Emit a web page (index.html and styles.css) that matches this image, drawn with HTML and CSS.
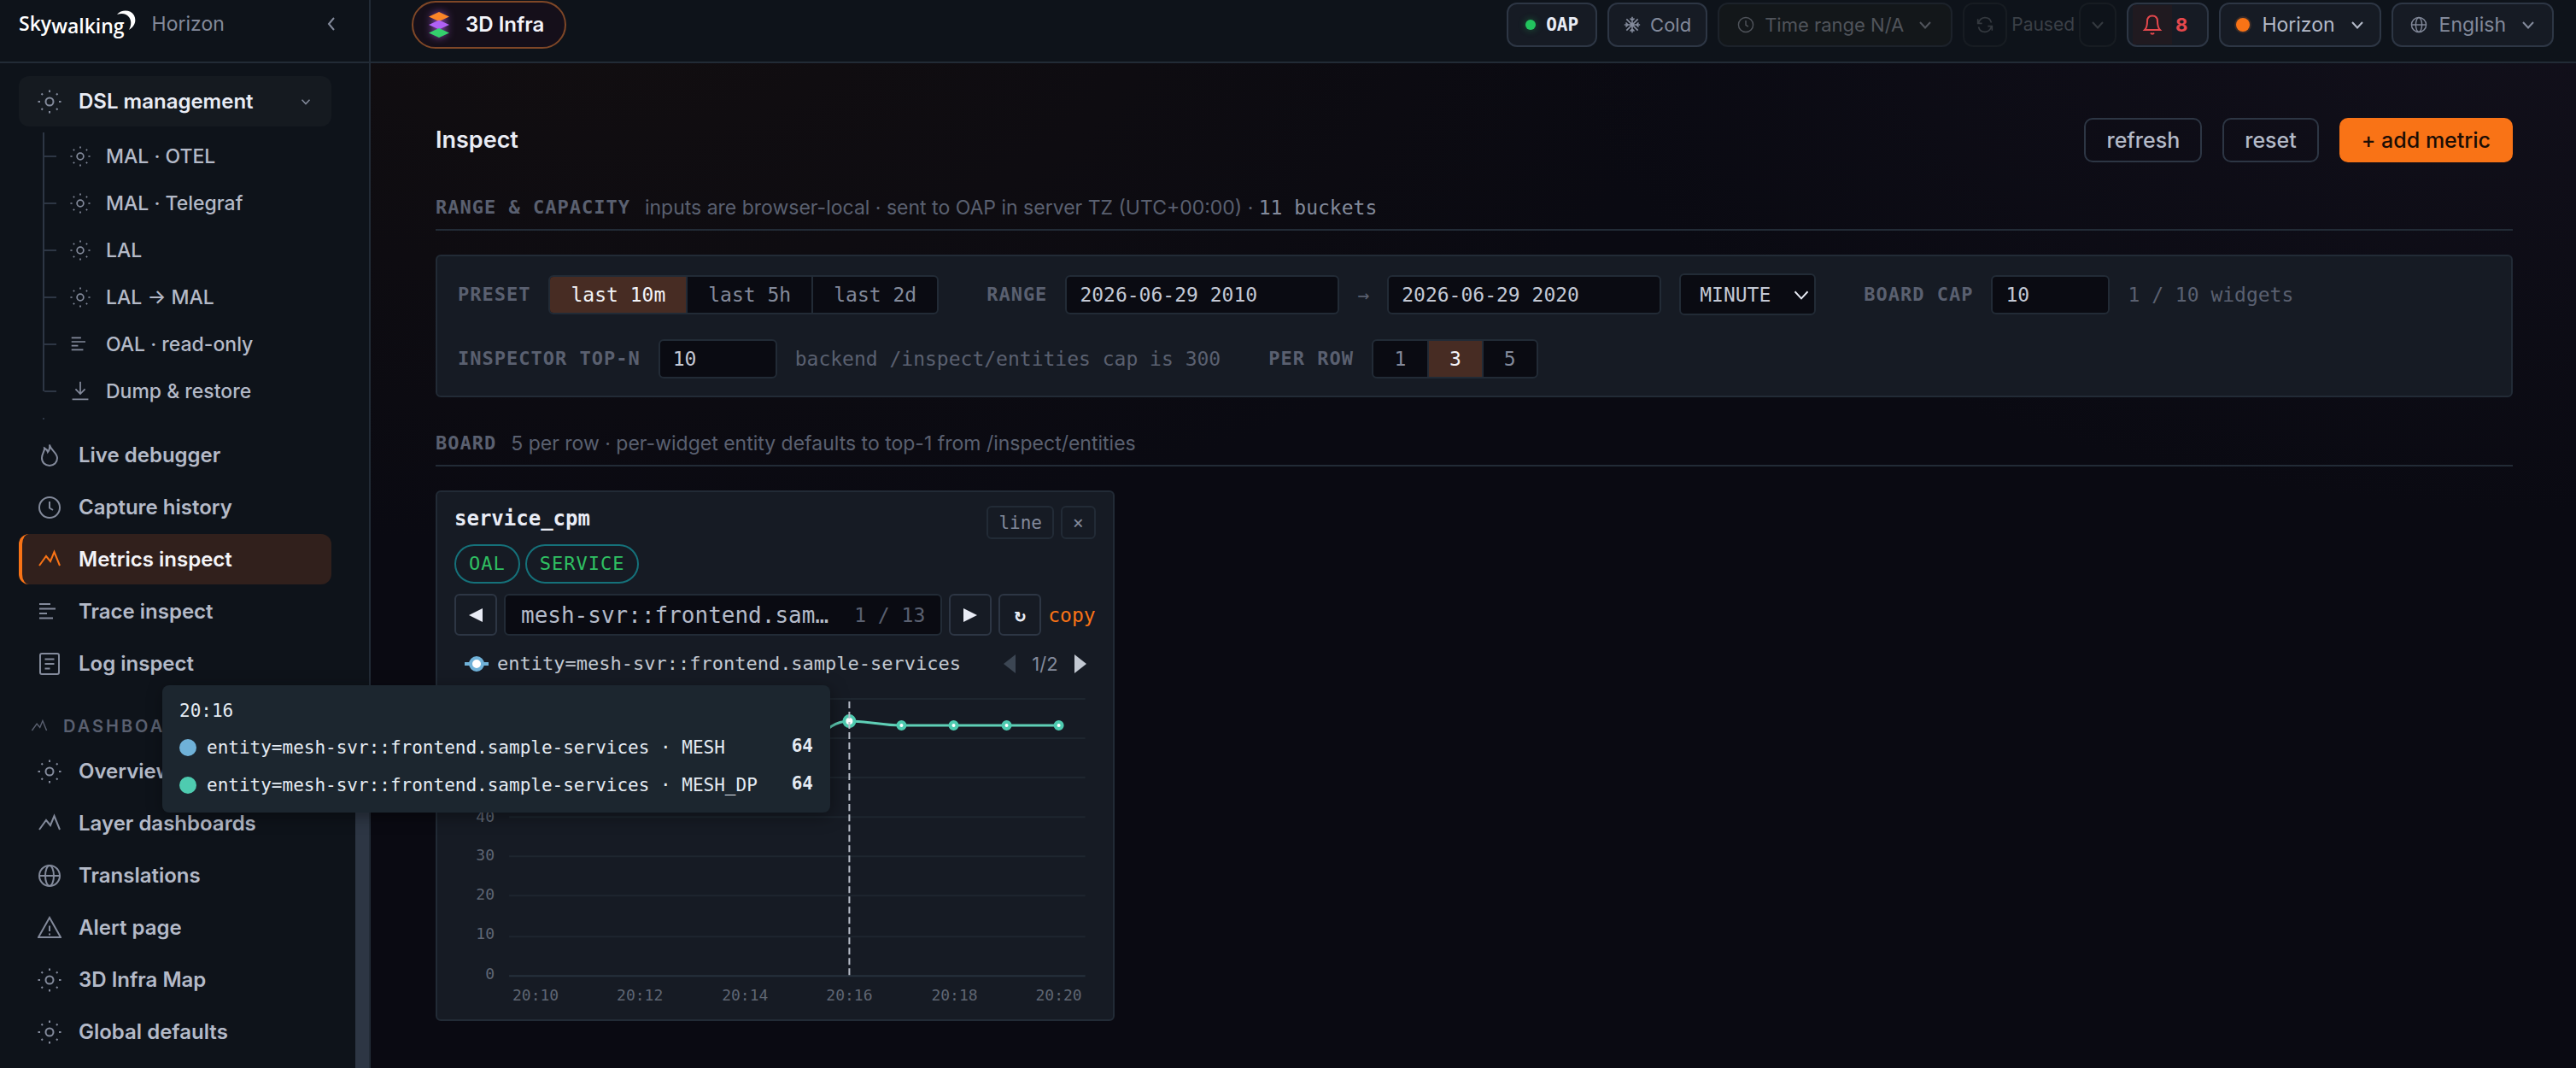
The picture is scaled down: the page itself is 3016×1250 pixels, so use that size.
FILE: index.html
```html
<!DOCTYPE html>
<html lang="en">
<head>
<meta charset="utf-8">
<title>Horizon · Metrics inspect</title>
<link rel="stylesheet" href="styles.css">
</head>
<body>
<svg class="defs" aria-hidden="true">
  <symbol id="i-gear" viewBox="0 0 28 28"><circle cx="14" cy="14" r="4.5"/><path d="M14 .5v2.500M14 25v2.500M.5 14h2.500M25 14h2.500M4.500 4.500l1.500 1.500M22 22l1.500 1.500M4.500 23.500l1.500-1.500M22 6l1.500-1.500"/></symbol>
  <symbol id="i-lines" viewBox="0 0 28 28"><path d="M2 5h13M2 10.500h19M2 16h9M2 21.500h16"/></symbol>
  <symbol id="i-down" viewBox="0 0 28 28"><path d="M14 1v16M7.500 11l6.500 6.500 6.500-6.500M3 25h22"/></symbol>
  <symbol id="i-flame" viewBox="0 0 28 28"><path d="M14 1.500c.5 4 0 6-2 8.500-.5-2-2-3.500-4-4.500.5 4-3 6-3 11.500 0 5.500 4 9 9 9s9-3.500 9-9C23 11 15.500 8 14 1.500z"/></symbol>
  <symbol id="i-clock" viewBox="0 0 28 28"><circle cx="14" cy="14" r="12"/><path d="M14 7v7.500l4 2.500"/></symbol>
  <symbol id="i-peaks" viewBox="0 0 28 28"><path d="M2 21l8-11 5 6L19.500 5 26 21"/></symbol>
  <symbol id="i-doc" viewBox="0 0 28 28"><rect x="3" y="2" width="22" height="24" rx="2"/><path d="M8.500 8.500h11M8.500 14h11M8.500 19.500h6"/></symbol>
  <symbol id="i-globe" viewBox="0 0 28 28"><circle cx="14" cy="14" r="12"/><path d="M2 14h24"/><ellipse cx="14" cy="14" rx="5" ry="12"/></symbol>
  <symbol id="i-alert" viewBox="0 0 28 28"><path d="M14 2l13 23H1zM14 11.500v6.500M14 20.500v2"/></symbol>
  <symbol id="i-chev" viewBox="0 0 16 16"><path d="M2 5l6 6.500L14 5"/></symbol>
  <symbol id="i-left" viewBox="0 0 16 16"><path d="M11 1L5 8l6 7"/></symbol>
  <symbol id="i-snow" viewBox="0 0 24 24"><path d="M12 1v22M1 12h22M4 4l16 16M20 4L4 20M9 3l3 3 3-3M9 21l3-3 3 3M3 9l3 3-3 3M21 9l-3 3 3 3"/></symbol>
  <symbol id="i-sync" viewBox="0 0 24 24"><path d="M2 4v6h6M3 9c2-5 5-7 9-7 5 0 8 3 9 7M22 20v-6h-6M21 15c-2 5-5 7-9 7-5 0-8-3-9-7"/></symbol>
  <symbol id="i-bell" viewBox="0 0 24 24"><path d="M3 18c2-2 3-4 3-10 0-4 2-6.500 6-6.500S18 4 18 8c0 6 1 8 3 10zM10 21.500c1 1.500 3 1.500 4 0"/></symbol>
</svg>
<div class="app">
  <aside class="sidebar">
    <div class="brand">
      <span class="logo">Sky<span class="low">walking</span><svg class="moon" viewBox="0 0 22 24"><path d="M0 5C5-1 16-1 20 6c3 6 1 13-6 17 3-6 3-11 0-15C11 4 6 3 0 5z"/></svg></span>
      <span class="product">Horizon</span>
      <button class="collapse" aria-label="Collapse sidebar"><svg class="ic s16"><use href="#i-left"/></svg></button>
    </div>
    <nav class="nav">
      <a class="item open" href="#"><svg class="ic s28"><use href="#i-gear"/></svg><span>DSL management</span><svg class="ic s12"><use href="#i-chev"/></svg></a>
      <ul class="tree">
        <li><a href="#"><svg class="ic s24"><use href="#i-gear"/></svg>MAL · OTEL</a></li>
        <li><a href="#"><svg class="ic s24"><use href="#i-gear"/></svg>MAL · Telegraf</a></li>
        <li><a href="#"><svg class="ic s24"><use href="#i-gear"/></svg>LAL</a></li>
        <li><a href="#"><svg class="ic s24"><use href="#i-gear"/></svg>LAL → MAL</a></li>
        <li><a href="#"><svg class="ic s24"><use href="#i-lines"/></svg>OAL · read-only</a></li>
        <li><a href="#"><svg class="ic s24"><use href="#i-down"/></svg>Dump &amp; restore</a></li>
      </ul>
      <a class="item" href="#"><svg class="ic s28"><use href="#i-flame"/></svg><span>Live debugger</span></a>
      <a class="item" href="#"><svg class="ic s28"><use href="#i-clock"/></svg><span>Capture history</span></a>
      <a class="item active" href="#"><svg class="ic s28"><use href="#i-peaks"/></svg><span>Metrics inspect</span></a>
      <a class="item" href="#"><svg class="ic s28"><use href="#i-lines"/></svg><span>Trace inspect</span></a>
      <a class="item" href="#"><svg class="ic s28"><use href="#i-doc"/></svg><span>Log inspect</span></a>
      <h2 class="group"><svg class="ic s20"><use href="#i-peaks"/></svg>DASHBOARDS</h2>
      <a class="item" href="#"><svg class="ic s28"><use href="#i-gear"/></svg><span>Overview</span></a>
      <a class="item" href="#"><svg class="ic s28"><use href="#i-peaks"/></svg><span>Layer dashboards</span></a>
      <a class="item" href="#"><svg class="ic s28"><use href="#i-globe"/></svg><span>Translations</span></a>
      <a class="item" href="#"><svg class="ic s28"><use href="#i-alert"/></svg><span>Alert page</span></a>
      <a class="item" href="#"><svg class="ic s28"><use href="#i-gear"/></svg><span>3D Infra Map</span></a>
      <a class="item" href="#"><svg class="ic s28"><use href="#i-gear"/></svg><span>Global defaults</span></a>
    </nav>
    <div class="thumb"></div>
  </aside>
  <div class="page">
    <header class="topbar">
      <a class="infra" href="#"><svg class="stack" viewBox="0 0 24 30"><path fill="#fb8527" d="M12 0l12 5.500L12 11 0 5.500z"/><path fill="#b061f5" d="M12 9.500L24 15l-12 5.500L0 15z"/><path fill="#34cf6d" d="M12 19l12 5.500L12 30 0 24.500z"/></svg>3D Infra</a>
      <button class="chip oap"><i class="dot green"></i>OAP</button>
      <button class="chip"><svg class="ic s20"><use href="#i-snow"/></svg>Cold</button>
      <button class="chip off" disabled><svg class="ic s20"><use href="#i-clock"/></svg>Time range N/A<svg class="ic s16"><use href="#i-chev"/></svg></button>
      <div class="paused">
        <button class="chip ghost sync" disabled aria-label="Refresh now"><svg class="ic s20"><use href="#i-sync"/></svg></button>
        <span>Paused</span>
        <button class="chip ghost more" disabled aria-label="Refresh interval"><svg class="ic s16"><use href="#i-chev"/></svg></button>
      </div>
      <button class="chip bell"><span class="bellbox"><svg class="ic s24"><use href="#i-bell"/></svg></span>8</button>
      <button class="chip theme"><i class="dot orange"></i>Horizon<svg class="ic s16"><use href="#i-chev"/></svg></button>
      <button class="chip lang"><svg class="ic s20"><use href="#i-globe"/></svg>English<svg class="ic s16"><use href="#i-chev"/></svg></button>
    </header>
    <main class="content">
      <div class="titlebar">
        <h1>Inspect</h1>
        <button class="btn">refresh</button>
        <button class="btn">reset</button>
        <button class="btn primary">+ add metric</button>
      </div>
      <section class="section">
        <div class="head"><h2>RANGE &amp; CAPACITY</h2><p>inputs are browser-local · sent to OAP in server TZ (UTC+00:00) · <code>11 buckets</code></p></div>
        <form class="panel">
          <div class="row">
            <div class="field"><span class="label">PRESET</span>
              <div class="seg"><button type="button" class="on">last 10m</button><button type="button">last 5h</button><button type="button">last 2d</button></div></div>
            <div class="field"><label class="label" for="from">RANGE</label>
              <input class="box date" id="from" value="2026-06-29 2010"><span class="arrow">→</span>
              <input class="box date" aria-label="Range end" value="2026-06-29 2020">
              <span class="pick"><select class="box" aria-label="Step"><option>MINUTE</option></select><svg class="ic s20"><use href="#i-chev"/></svg></span></div>
            <div class="field"><label class="label" for="cap">BOARD CAP</label>
              <input class="box num" id="cap" value="10"><span class="note">1 / 10 widgets</span></div>
          </div>
          <div class="row">
            <div class="field"><label class="label" for="topn">INSPECTOR TOP-N</label>
              <input class="box num" id="topn" value="10"><span class="note">backend /inspect/entities cap is 300</span></div>
            <div class="field"><span class="label">PER ROW</span>
              <div class="seg"><button type="button">1</button><button type="button" class="on">3</button><button type="button">5</button></div></div>
          </div>
        </form>
      </section>
      <section class="section">
        <div class="head"><h2>BOARD</h2><p>5 per row · per-widget entity defaults to top-1 from /inspect/entities</p></div>
        <div class="board">
          <article class="card">
            <div class="cardhead"><h3>service_cpm</h3><button class="mini">line</button><button class="mini" aria-label="Remove">×</button></div>
            <div class="tags"><span>OAL</span><span>SERVICE</span></div>
            <div class="stepper">
              <button class="step" aria-label="Previous entity"><svg viewBox="0 0 16 16"><path d="M16 0v16L0 8z"/></svg></button>
              <div class="entity"><span class="name">mesh-svr::frontend.sample-services</span><span class="count">1 / 13</span></div>
              <button class="step" aria-label="Next entity"><svg viewBox="0 0 16 16"><path d="M0 0v16l16-8z"/></svg></button>
              <button class="step">↻</button>
              <a class="copy" href="#">copy</a>
            </div>
            <div class="legend">
              <svg class="mark" viewBox="0 0 28 18"><path d="M0 9h28" stroke="#6fb1d8" stroke-width="4"/><circle cx="14" cy="9" r="7" fill="#fff" stroke="#6fb1d8" stroke-width="4"/></svg>
              <span class="series">entity=mesh-svr::frontend.sample-services</span>
              <button class="pg dim" aria-label="Previous series"><svg viewBox="0 0 14 22"><path d="M14 0v22L0 11z"/></svg></button>
              <span class="pages">1/2</span>
              <button class="pg" aria-label="Next series"><svg viewBox="0 0 14 22"><path d="M0 0v22l14-11z"/></svg></button>
            </div>
            <div class="chart">
              <svg class="plot" viewBox="0 0 750 380" role="img" aria-label="service_cpm by minute">
                <g class="grid"><path d="M64 20H738M64 66H738M64 112H738M64 158H738M64 204H738M64 250H738M64 298H738"/><path class="axis" d="M64 344H738"/></g>
                <g class="ylab"><text x="47" y="164">40</text><text x="47" y="209">30</text><text x="47" y="255">20</text><text x="47" y="301">10</text><text x="47" y="348">0</text></g>
                <g class="xlab"><text x="95" y="373">20:10</text><text x="217" y="373">20:12</text><text x="340" y="373">20:14</text><text x="462" y="373">20:16</text><text x="585" y="373">20:18</text><text x="707" y="373">20:20</text></g>
                <path class="line" d="M401 80C425 80 430 46 462 46C485 46 500 51 523 51H707"/>
                <g class="pts"><circle cx="523" cy="51" r="4"/><circle cx="584" cy="51" r="4"/><circle cx="646" cy="51" r="4"/><circle cx="707" cy="51" r="4"/><circle cx="462" cy="46" r="6"/></g>
                <path class="cross" d="M462 23V344"/>
              </svg>
              <div class="tip">
                <div class="time">20:16</div>
                <div class="tiprow"><i style="background:#6fb1d8"></i><span>entity=mesh-svr::frontend.sample-services · MESH</span><b>64</b></div>
                <div class="tiprow"><i style="background:#4ecbb0"></i><span>entity=mesh-svr::frontend.sample-services · MESH_DP</span><b>64</b></div>
              </div>
            </div>
          </article>
        </div>
      </section>
    </main>
  </div>
</div>
</body>
</html>
```
FILE: styles.css
```css
:root {
  --mono: "DejaVu Sans Mono", monospace;
  --sans: Inter, sans-serif;
  --rail: #0e131a;
  --panel: #161b24;
  --line: #222b36;
  --line2: #2d3644;
  --dark: #0a0b12;
  --text: #b4bac8;
  --bright: #e9ecf5;
  --muted: #838a9b;
  --faint: #5a6070;
  --orange: #f97316;
}
* { box-sizing: border-box; }
body { margin: 0; background: #0a0a12; color: var(--text); font: 22px/28px var(--sans); overflow: hidden; }
h1, h2, h3, p, ul { margin: 0; padding: 0; }
ul { list-style: none; }
a { color: inherit; text-decoration: none; }
button, input, select { font: inherit; color: inherit; margin: 0; }
button { background: none; border: 0; padding: 0; display: flex; align-items: center; justify-content: center; }
svg { display: block; flex: none; }
.defs { position: absolute; width: 0; height: 0; }
.ic { fill: none; stroke: currentColor; stroke-width: 2; }
.s12 { width: 12px; height: 12px; }
.s16 { width: 16px; height: 16px; }
.s20 { width: 20px; height: 20px; }
.s24 { width: 24px; height: 24px; }
.s28 { width: 28px; height: 28px; }

.app { display: flex; height: 100vh; }
.sidebar { position: relative; flex: none; width: 434px; background: var(--rail); border-right: 2px solid var(--line); overflow: hidden; }
.brand { height: 74px; padding: 0 36px 16px 22px; display: flex; align-items: center; border-bottom: 2px solid var(--line); }
.logo { display: flex; align-items: flex-start; color: #fff; font: 600 23px/32px "Open Sans", sans-serif; }
.low { margin-top: 3px; }
.moon { width: 22px; height: 24px; margin: 1px 0 0 -9px; fill: #fff; }
.product { margin-left: 19px; color: var(--muted); font-size: 23px; flex: 1; }
.collapse { color: var(--muted); }
.nav { padding: 15px 44px 0 22px; display: flex; flex-direction: column; gap: 2px; }
.item { flex: none; height: 59px; padding: 0 24px 0 22px; border-radius: 12px; display: flex; align-items: center; gap: 20px; font-size: 24px; font-weight: 600; }
.item span { flex: 1; white-space: nowrap; }
.item .ic { color: var(--muted); }
.item.open { background: #151a20; color: var(--bright); }
.item.active { background: #31201c; color: #f4f4f8; border-left: 4px solid var(--orange); padding-left: 18px; }
.item.active .ic { color: var(--orange); }
.tree { position: relative; margin: 5px 0 0 28px; padding-bottom: 16px; }
.tree:after { content: ""; position: absolute; left: 0; bottom: 10px; width: 2px; height: 2px; background: var(--line2); }
.tree li { position: relative; height: 55px; border-left: 2px solid var(--line2); display: flex; align-items: center; }
.tree li:before { content: ""; width: 14px; height: 2px; background: var(--line2); }
.tree li:last-child { border-color: transparent; }
.tree li:last-child:after { content: ""; position: absolute; left: -2px; top: 0; width: 2px; height: 28px; background: var(--line2); }
.tree a { margin-left: 16px; display: flex; align-items: center; gap: 18px; font-size: 23px; font-weight: 500; white-space: nowrap; }
.tree .ic { color: var(--muted); }
.group { height: 43px; margin-top: 20px; padding: 0 14px; display: flex; align-items: center; gap: 18px; font-size: 20px; font-weight: 600; letter-spacing: 3px; color: var(--faint); }
.thumb { position: absolute; right: 0; top: 880px; bottom: 0; width: 16px; background: var(--line2); }

.page { flex: 1; min-width: 0; background: radial-gradient(ellipse 1300px 640px at 10% 0, #120e10, transparent), radial-gradient(ellipse 1200px 600px at 100% 0, #12101b, transparent); }
.topbar { height: 74px; padding: 0 26px 14px 48px; display: flex; align-items: center; gap: 12px; background: var(--rail); border-bottom: 2px solid var(--line); }
.infra { height: 56px; margin-right: auto; padding: 0 24px 0 18px; display: flex; align-items: center; gap: 19px; border: 2px solid #7f4727; border-radius: 28px; background: #150f1a; color: #f4f4fa; font-size: 24px; font-weight: 600; }
.stack { width: 24px; height: 30px; filter: drop-shadow(0 0 5px #8a4bb0); }
.chip { height: 52px; padding: 0 17px; gap: 11px; border: 2px solid var(--line2); border-radius: 12px; background: var(--panel); color: var(--muted); white-space: nowrap; }
.chip.oap { padding: 0 20px; gap: 12px; color: var(--bright); font: 700 21px var(--mono); }
.dot { width: 12px; height: 12px; border-radius: 50%; }
.green { background: #22c55e; box-shadow: 0 0 8px #22c55e66; }
.orange { width: 16px; height: 16px; background: var(--orange); box-shadow: 0 0 0 2px #3a2c28; }
.chip.off { padding: 0 22px 0 21px; gap: 12px; border-color: #1c222a; background: #13171a; color: #50545b; }
.chip.off .ic:last-child { margin-left: 5px; }
.paused { display: flex; align-items: center; gap: 5px; color: #3b4047; font-size: 21px; }
.chip.ghost { border-color: #171c22; background: none; padding: 0 12px; color: #34393f; }
.chip.sync { padding: 0 14px; }
.chip.bell { padding: 0 23px 0 5px; gap: 4px; color: #e5484d; font-weight: 700; }
.bellbox { width: 46px; height: 46px; display: grid; place-items: center; background: #201a20; }
.chip.theme, .chip.lang { padding: 0 18px; gap: 14px; font-size: 23px; }
.chip.lang { padding: 0 20px; }
.chip.theme { color: var(--text); }
.chip.theme .ic, .chip.lang .ic:last-child { margin-left: 4px; }

.content { padding: 64px 74px 0 76px; }
.titlebar { display: flex; align-items: center; gap: 24px; }
h1 { flex: 1; font-size: 27px; line-height: 52px; font-weight: 600; color: var(--bright); }
.btn { height: 52px; padding: 0 24px; border: 2px solid var(--line2); border-radius: 10px; font-size: 25px; font-weight: 500; }
.btn.primary { padding: 0 26px; border: 0; background: var(--orange); color: #1b0d05; }
.section { padding-top: 39px; }
.section + .section { padding-top: 40px; }
.head { height: 41px; display: flex; align-items: flex-start; gap: 17px; border-bottom: 2px solid var(--line); color: var(--faint); font-size: 23px; }
.head h2 { font: 700 22px/28px var(--mono); letter-spacing: 1px; }
.head code { font: 23px/28px var(--mono); color: var(--muted); }
.panel { margin-top: 28px; padding: 20px 24px; display: flex; flex-direction: column; gap: 28px; border: 2px solid var(--line); border-radius: 6px; background: var(--panel); font: 23px/28px var(--mono); }
.row { display: flex; gap: 56px; }
.field { display: flex; align-items: center; gap: 21px; }
.label { font: 700 22px/28px var(--mono); letter-spacing: 1px; color: var(--faint); }
.seg { height: 46px; display: flex; border: 2px solid var(--line); border-radius: 6px; background: var(--dark); overflow: hidden; }
.seg button { min-width: 63px; padding: 0 24px; color: var(--muted); }
.seg button + button { border-left: 2px solid var(--line); }
.seg .on { background: #472c23; color: #f4f4f8; }
.box { height: 46px; padding: 0 15px; border: 2px solid var(--line); border-radius: 6px; background: var(--dark); color: #c3c8d4; outline: 0; }
.date { width: 321px; }
.num { width: 139px; }
.arrow, .note { color: var(--faint); }
.pick { position: relative; }
.pick select { display: block; appearance: none; width: 160px; height: 49px; padding: 0 22px; }
.pick svg { position: absolute; right: 7px; top: 15px; color: var(--bright); stroke-width: 1.5; }

.board { margin-top: 28px; display: grid; grid-template-columns: repeat(3, minmax(0, 1fr)); gap: 24px; }
.card { padding: 16px 20px 15px; border: 2px solid var(--line); border-radius: 6px; background: var(--panel); font: 22px/28px var(--mono); }
.cardhead { display: flex; gap: 8px; align-items: center; }
h3 { flex: 1; font-size: 24px; line-height: 28px; padding-bottom: 10px; color: var(--bright); }
.mini { height: 39px; padding: 0 12px; border: 2px solid var(--line); border-radius: 6px; font-size: 21px; color: var(--muted); }
.tags { margin-top: 6px; display: flex; gap: 6px; }
.tags span { height: 46px; padding: 0 15px; border: 2px solid #15717a; border-radius: 23px; line-height: 42px; letter-spacing: 1px; color: #2fbf62; }
.stepper { margin-top: 12px; display: flex; align-items: center; gap: 8px; height: 49px; }
.step { flex: none; width: 50px; height: 49px; border: 2px solid var(--line2); border-radius: 6px; color: var(--bright); font-weight: 700; }
.step svg { width: 16px; height: 16px; fill: currentColor; }
.entity { flex: 1; min-width: 0; height: 49px; padding: 0 18px; display: flex; align-items: center; gap: 20px; border: 2px solid var(--line); border-radius: 6px; background: var(--dark); }
.name { flex: 1; overflow: hidden; text-overflow: ellipsis; white-space: nowrap; font-size: 26px; }
.count { color: var(--faint); white-space: nowrap; font-size: 23px; }
.copy { color: var(--orange); font-size: 23px; }
.legend { height: 66px; padding: 0 11px 0 12px; display: flex; align-items: center; }
.mark { width: 28px; height: 18px; }
.series { flex: 1; margin-left: 10px; color: #c3c9d2; }
.pg svg { width: 14px; height: 22px; fill: #c3c9d2; }
.pg.dim svg { fill: #3c4653; }
.pages { margin: 0 19px; font-family: var(--sans); color: var(--muted); }
.chart { position: relative; margin-top: -12px; }
.plot { width: 100%; height: auto; }
.grid { fill: none; stroke: #1e262f; stroke-width: 2; }
.axis { stroke: #26313c; }
.plot text { font: 18px var(--mono); fill: #5f6673; }
.ylab { text-anchor: end; }
.xlab { text-anchor: middle; }
.line { fill: none; stroke: #5fcfb6; stroke-width: 3; }
.pts { fill: #fff; stroke: #4ecbb0; stroke-width: 4; }
.cross { stroke: #b9bfca; stroke-width: 2; stroke-dasharray: 8 4; }
.tip { position: absolute; left: -342px; top: 4px; z-index: 5; width: 782px; height: 149px; padding: 16px 20px; border-radius: 8px; background: #1c262f; color: #e4ebf3; font: 21px/28px var(--mono); box-shadow: 2px 4px 20px #0006; }
.tiprow { height: 44px; display: flex; align-items: center; gap: 12px; padding-top: 14px; white-space: nowrap; }
.tiprow i { width: 20px; height: 20px; border-radius: 50%; }
.tiprow span { flex: 1; }
.tiprow b { padding-bottom: 4px; }
```
